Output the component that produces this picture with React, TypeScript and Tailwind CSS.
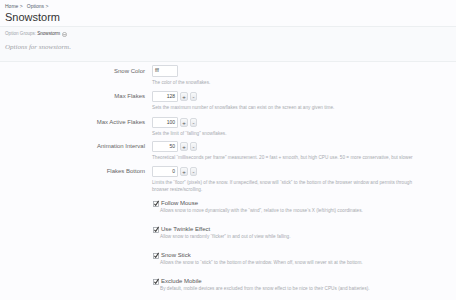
import React from "react";

type NumRow = { label: string; value: string; desc: string[]; mb: string; numeric: boolean };

function Stepper() {
  return (
    <div className="flex items-center gap-[2px] ml-[2px]">
      <span className="flex h-[9px] w-[8px] items-center justify-center rounded-[2px] border border-[#d8dbe0] bg-gradient-to-b from-[#f8f9fa] to-[#e6e8ec] text-[6px] leading-none text-[#555]">+</span>
      <span className="flex h-[9px] w-[7px] items-center justify-center rounded-[2px] border border-[#d8dbe0] bg-gradient-to-b from-[#f8f9fa] to-[#e6e8ec] text-[6px] leading-none text-[#555]">-</span>
    </div>
  );
}

function Check() {
  return (
    <svg width="7" height="7" viewBox="0 0 7 7" className="shrink-0">
      <rect x="0.5" y="1.5" width="5" height="5" fill="#fff" stroke="#a0a5ab" strokeWidth="0.8" />
      <path d="M1.4 3.8 L2.7 5.3 L5.6 0.9" fill="none" stroke="#444" strokeWidth="1.1" />
    </svg>
  );
}

export default function App() {
  const rows: NumRow[] = [
    { label: "Snow Color", value: "fff", desc: ["The color of the snowflakes."], mb: "mb-[5px]", numeric: false },
    { label: "Max Flakes", value: "128", desc: ["Sets the maximum number of snowflakes that can exist on the screen at any given time."], mb: "mb-[6px]", numeric: true },
    { label: "Max Active Flakes", value: "100", desc: ["Sets the limit of \u201cfalling\u201d snowflakes."], mb: "mb-[4px]", numeric: true },
    { label: "Animation Interval", value: "50", desc: ["Theoretical \u201cmilliseconds per frame\u201d measurement. 20 = fast + smooth, but high CPU use. 50 = more conservative, but slower"], mb: "mb-[5px]", numeric: true },
    {
      label: "Flakes Bottom",
      value: "0",
      desc: [
        "Limits the \u201cfloor\u201d (pixels) of the snow. If unspecified, snow will \u201cstick\u201d to the bottom of the browser window and permits through",
        "browser resize/scrolling.",
      ],
      mb: "mb-[6px]",
      numeric: true,
    },
  ];
  const checks = [
    { label: "Follow Mouse", desc: "Allows snow to move dynamically with the \u201cwind\u201d, relative to the mouse\u2019s X (left/right) coordinates." },
    { label: "Use Twinkle Effect", desc: "Allow snow to randomly \u201cflicker\u201d in and out of view while falling." },
    { label: "Snow Stick", desc: "Allows the snow to \u201cstick\u201d to the bottom of the window. When off, snow will never sit at the bottom." },
    { label: "Exclude Mobile", desc: "By default, mobile devices are excluded from the snow effect to be nice to their CPUs (and batteries)." },
  ];
  return (
    <div className="w-[456px] h-[300px] overflow-hidden bg-[#fcfcfe] font-['Liberation_Sans',sans-serif]">
      <div className="h-[26px] px-[5px] pt-[3px]">
        <div className="text-[5px] leading-[6px] text-[#56616e]">Home &gt;&nbsp;&nbsp; Options &gt;</div>
        <h1 className="mt-[2px] text-[11px] leading-[13px] text-[#333]">Snowstorm</h1>
      </div>
      <div className="h-[36px] border-y border-y-[#eceff1] bg-[#f9fafc] px-[5px] pt-[4px]">
        <div className="flex items-center gap-[1px] text-[4.6px] leading-[6px]">
          <span className="text-[#a0a4aa]">Option Groups:</span>
          <span className="text-[#444]">Snowstorm</span>
          <svg width="5" height="5" viewBox="0 0 6 6" className="ml-[1px]">
            <circle cx="3" cy="3" r="2.5" fill="#fff" stroke="#777" strokeWidth="0.6" />
            <path d="M1.7 2.4 L3 3.8 L4.3 2.4" fill="none" stroke="#555" strokeWidth="0.7" />
          </svg>
        </div>
        <div className="mt-[6px] font-['Liberation_Serif',serif] italic text-[7px] leading-[9px] text-[#a0a3a8]">Options for snowstorm.</div>
      </div>
      <div className="pt-[3px]">
        {rows.map((r, i) => (
          <div key={r.label} className={`flex gap-[7px] ${r.mb}`}>
            <div className={`w-[145px] shrink-0 text-right text-[6px] text-[#666] ${i === 0 ? "leading-[12px]" : "leading-[11px]"}`}>{r.label}</div>
            <div className="flex flex-col">
              <div className="flex items-center">
                <div
                  className={`w-[26px] ${i === 0 ? "h-[12px]" : "h-[11px]"} rounded-[1px] border border-[#d8dbe0] bg-white px-[2px] text-[5px] text-[#444] flex items-center ${r.numeric ? "justify-end" : "justify-start"}`}
                >
                  {r.value}
                </div>
                {r.numeric && <Stepper />}
              </div>
              <div className="mt-[2px] text-[4.7px] leading-[7px] text-[#a8abb0] whitespace-nowrap">
                {r.desc.map((d) => (
                  <div key={d}>{d}</div>
                ))}
              </div>
            </div>
          </div>
        ))}
        <div className="ml-[153px] flex flex-col gap-[11px]">
          {checks.map((c) => (
            <div key={c.label} className="flex flex-col">
              <div className="flex items-center gap-[1px] text-[6px] leading-[8px] text-[#555]">
                <Check />
                <span>{c.label}</span>
              </div>
              <div className="ml-[7px] text-[4.7px] leading-[7px] text-[#a8abb0] whitespace-nowrap">{c.desc}</div>
            </div>
          ))}
        </div>
      </div>
    </div>
  );
}
